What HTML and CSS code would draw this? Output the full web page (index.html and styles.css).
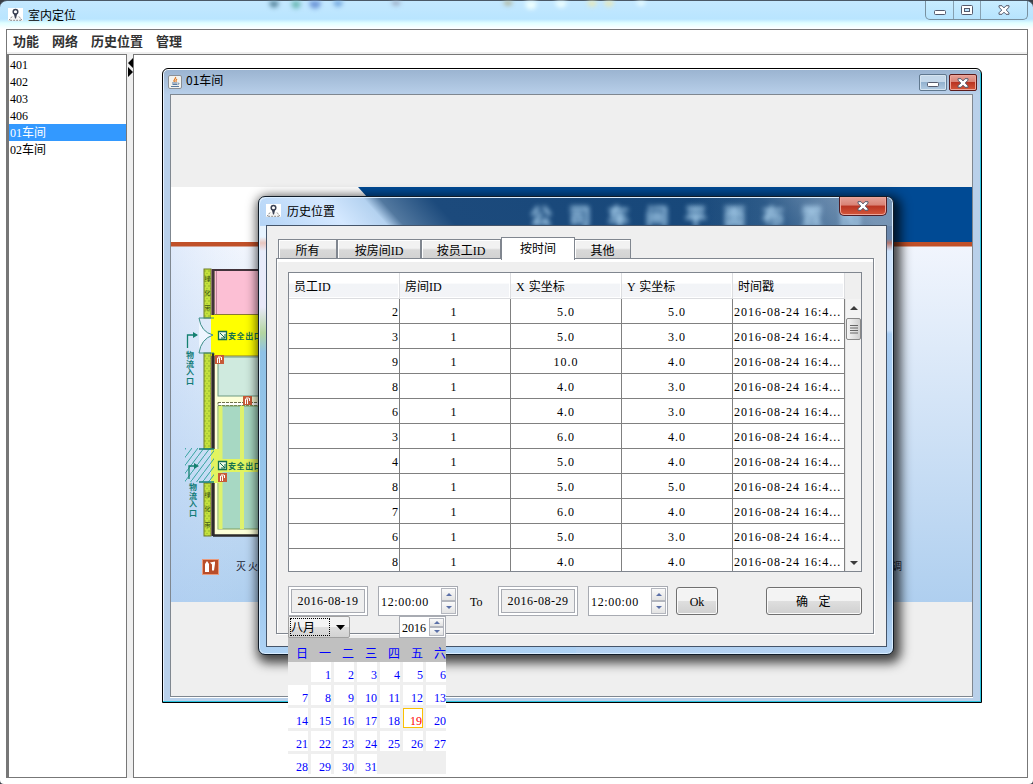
FILE: index.html
```html
<!DOCTYPE html>
<html lang="zh-CN">
<head>
<meta charset="utf-8">
<title>室内定位</title>
<link rel="stylesheet" href="styles.css">
</head>
<body>
<svg class="defs" width="0" height="0">
  <symbol id="pin" viewBox="0 0 15 13">
    <rect width="15" height="13" fill="#fff"/>
    <path d="M4 8.500 1 12.300h13l-3-3.800" fill="#f6f6f6" stroke="#888" stroke-width="1" stroke-dasharray="2 1"/>
    <circle cx="7.500" cy="3.700" r="2.300" fill="#fff" stroke="#3c4254" stroke-width="1.500"/>
    <path d="M5.800 5.800h3.400L8 10.500H7z" fill="#3c4254"/>
  </symbol>
  <symbol id="cross" viewBox="0 0 12 10">
    <path d="M1 .7h3l2 2.200L8 .7h3v1.600L8.200 5 11 7.800v1.500H8L6 7.200 4 9.300H1V7.800L3.800 5 1 2.300z" fill="#fff" stroke="#555a6c" stroke-width="1"/>
  </symbol>
  <symbol id="bar" viewBox="0 0 12 5">
    <rect x=".5" y=".5" width="11" height="4" rx="1" fill="#fff" stroke="#555a6c"/>
  </symbol>
</svg>

<div class="main">
  <header class="main-title">
    <svg class="pin"><use href="#pin"/></svg>
    <span>室内定位</span>
    <div class="blobs"></div>
    <div class="main-buttons">
      <b><svg width="12" height="5"><use href="#bar"/></svg></b>
      <b><svg width="12" height="10" viewBox="0 0 12 10"><rect x=".5" y=".5" width="11" height="9" rx="1" fill="#fff" stroke="#555a6c"/><rect x="3.500" y="3.500" width="5" height="3" fill="#bfe6ff" stroke="#555a6c"/></svg></b>
      <b><svg width="12" height="10"><use href="#cross"/></svg></b>
    </div>
  </header>
  <div class="client">
    <nav class="menu"><span>功能</span><span>网络</span><span>历史位置</span><span>管理</span></nav>
    <div class="split">
      <ul class="rooms">
        <li>401</li><li>402</li><li>403</li><li>406</li><li class="on">01车间</li><li>02车间</li>
      </ul>
      <div class="divider"><svg width="6" height="22" viewBox="0 0 6 22"><path d="M6 3v10L1 8zM1 12v10l5-5z" fill="#000"/></svg></div>
      <div class="desk"></div>
    </div>
  </div>
</div>

<section class="frame">
  <header class="frame-title">
    <svg width="14" height="14" viewBox="0 0 14 14"><rect x=".5" y=".5" width="13" height="13" rx="1.500" fill="#f2f2ee" stroke="#8a8f96"/><path d="M7.500 2c1 1.500-3 2.500-1 5M9 4c-1.500 1-1.500 1.500-.8 3" stroke="#e07820" stroke-width="1.200" fill="none"/><path d="M4 8h5.500M4.500 9.500h4.500M3 11.500h8M10 8c1.500 0 1 1.500-.5 1.700" stroke="#5a7ba0" fill="none"/></svg>
    <span>01车间</span>
    <div class="frame-buttons"><b><svg width="12" height="5"><use href="#bar"/></svg></b><b class="red"><svg width="12" height="10"><use href="#cross"/></svg></b></div>
  </header>
  <div class="frame-body">
    <svg class="plan" width="801" height="415" viewBox="171 187 801 415">
      <defs>
        <linearGradient id="sky" x1="0" y1="0" x2="0" y2="1"><stop offset="0" stop-color="#f1f5fd"/><stop offset="1" stop-color="#afcfef"/></linearGradient>
        <linearGradient id="left" x1="0" y1="0" x2="1" y2="0"><stop offset="0" stop-color="#b5cff5" stop-opacity=".3"/><stop offset="1" stop-color="#c5dcf8" stop-opacity="0"/></linearGradient>
        <pattern id="hedge" width="4" height="5" patternUnits="userSpaceOnUse"><rect width="4" height="5" fill="#c3e03c"/><circle cx="1" cy="1" r=".7" fill="#7da52a"/><circle cx="3" cy="3.500" r=".6" fill="#8cb02c"/></pattern>
        <pattern id="hatch" width="6" height="8" patternUnits="userSpaceOnUse"><path d="M0 8 6 0" stroke="#35a3a0" stroke-width="1"/></pattern>
        <g id="fire"><rect width="9" height="9" fill="#c75a38"/><path d="M2.500 8V3h2v5M6.500 2v3M3 2h3" stroke="#fff" fill="none"/></g>
      </defs>
      <rect x="171" y="187" width="801" height="55" fill="#fff"/>
      <path d="M358 187h614v55H408z" fill="#004a94"/>
      <rect x="171" y="246" width="801" height="356" fill="url(#sky)"/>
      <rect x="171" y="246" width="70" height="356" fill="url(#left)"/>
      <rect x="171" y="242" width="801" height="4.500" fill="#c05029"/>
      <rect x="204" y="269" width="7" height="49" fill="url(#hedge)" stroke="#6e7c28"/>
      <rect x="204" y="353" width="7" height="96" fill="url(#hedge)" stroke="#6e7c28"/>
      <rect x="204" y="483" width="7" height="53" fill="url(#hedge)" stroke="#6e7c28"/>
      <path d="M211 269h4v49h-4zM211 353h4v96h-4zM211 483h4v53h-4z" fill="#8a7868"/>
      <g class="green"><text x="204.500" y="281">绿</text><text x="204.500" y="295">化</text><text x="204.500" y="310">带</text><text x="204.500" y="497">绿</text><text x="204.500" y="511">化</text><text x="204.500" y="527">带</text></g>
      <rect x="215" y="270" width="60" height="266" fill="#fcffd8"/>
      <rect x="215" y="271" width="62" height="43" fill="#fcbfd4"/>
      <path d="M216.500 271v43" stroke="#c48aa0"/>
      <path d="M213 318V269M213 270h62" stroke="#43333b" stroke-width="2" fill="none"/>
      <path d="M211 315h64v41h-64z" fill="#ff0"/>
      <path d="M215 314.500h60M217 356h58" stroke="#8a7a35"/>
      <rect x="218" y="357" width="57" height="39" fill="#cfeade" stroke="#6c9a80"/>
      <path d="M218 402.500h60v3h-60z" fill="#fff" stroke="#6d7049" stroke-dasharray="3 1"/>
      <rect x="218" y="406" width="57" height="123" fill="#a7d8c3" stroke="#7ea05c"/>
      <path d="M220.500 406v123M242 406v123" stroke="#def26c" stroke-width="4"/>
      <path d="M211 459h64v13h-64zM211 449h8v34h-8z" fill="#e2f460"/>
      <path d="M213 353v96M213 483v53M213 535.500h62" stroke="#2b2b2b" stroke-width="2.500" fill="none"/>
      <path d="M199 318h15M199 353h15M199 318q2 14 14 17q-12 4-14 18" fill="#eef6ff" stroke="#3c8e88"/>
      <rect x="185" y="448" width="29" height="34" fill="url(#hatch)"/>
      <path d="M199 449h15M199 482h15" stroke="#16807a" stroke-width="1.500"/>
      <path d="M187.500 348v-13h9M189 479v-13h7" stroke="#148070" stroke-width="1.300" fill="none"/>
      <path d="M193 332l5 3-5 3zM194 463l5 3-5 3z" fill="#148070"/>
      <path d="M218.500 331.500h8v8h-8zM218.500 461.500h8v8h-8z" fill="#effbe8" stroke="#137050" stroke-width="1.300"/>
      <path d="M220 333l5 5m0-4v4h-4M220 463l5 5m0-4v4h-4" stroke="#137050" fill="none"/>
      <text class="exit" x="228" y="339">安全出口</text>
      <text class="exit" x="228" y="469">安全出口</text>
      <text class="gate" x="190" y="351">物流入口</text>
      <text class="gate" x="193" y="483">物流入口</text>
      <use href="#fire" x="215" y="355"/><use href="#fire" x="243" y="396"/><use href="#fire" x="218" y="473"/>
      <rect x="202.500" y="559.500" width="16" height="15" fill="#b84d29" stroke="#e99a7c"/>
      <path d="M205 572v-8l2-3 2 3v8zM210 562.500l5-1v2l-1 7h-2v-6z" fill="#fff"/>
      <text class="legend" x="236" y="570">灭火器</text>
      <text class="legend" x="892" y="570">调</text>
    </svg>
  </div>
</section>

<section class="dialog">
  <div class="glass"><i>公司车间平面布置图</i></div>
  <header class="dialog-title">
    <svg class="pin"><use href="#pin"/></svg>
    <span>历史位置</span>
    <b class="close"><svg width="12" height="10"><use href="#cross"/></svg></b>
  </header>
  <div class="dialog-body">
    <div class="tabs">
      <span class="t1">所有</span><span class="t2">按房间ID</span><span class="t3">按员工ID</span><span class="t4">按时间</span><span class="t5">其他</span>
    </div>
    <div class="panel">
      <div class="table">
        <div class="row head"><span>员工ID</span><span>房间ID</span><span>X 实坐标</span><span>Y 实坐标</span><span>时间戳</span></div>
        <div class="scroll">
          <div class="rows">
            <div class="row"><span>2</span><span>1</span><span>5.0</span><span>5.0</span><span>2016-08-24 16:4...</span></div>
            <div class="row"><span>3</span><span>1</span><span>5.0</span><span>3.0</span><span>2016-08-24 16:4...</span></div>
            <div class="row"><span>9</span><span>1</span><span>10.0</span><span>4.0</span><span>2016-08-24 16:4...</span></div>
            <div class="row"><span>8</span><span>1</span><span>4.0</span><span>3.0</span><span>2016-08-24 16:4...</span></div>
            <div class="row"><span>6</span><span>1</span><span>4.0</span><span>3.0</span><span>2016-08-24 16:4...</span></div>
            <div class="row"><span>3</span><span>1</span><span>6.0</span><span>4.0</span><span>2016-08-24 16:4...</span></div>
            <div class="row"><span>4</span><span>1</span><span>5.0</span><span>4.0</span><span>2016-08-24 16:4...</span></div>
            <div class="row"><span>8</span><span>1</span><span>5.0</span><span>5.0</span><span>2016-08-24 16:4...</span></div>
            <div class="row"><span>7</span><span>1</span><span>6.0</span><span>4.0</span><span>2016-08-24 16:4...</span></div>
            <div class="row"><span>6</span><span>1</span><span>5.0</span><span>3.0</span><span>2016-08-24 16:4...</span></div>
            <div class="row"><span>8</span><span>1</span><span>4.0</span><span>4.0</span><span>2016-08-24 16:4...</span></div>
          </div>
          <div class="bar">
            <svg width="8" height="4" viewBox="0 0 8 4"><path d="M0 4 4 0l4 4z" fill="#3c3c3c"/></svg>
            <div class="thumb"><svg width="8" height="9" viewBox="0 0 8 9"><path d="M0 .5h8M0 3h8M0 5.500h8M0 8h8" stroke="#666"/></svg></div>
            <svg class="down" width="8" height="4" viewBox="0 0 8 4"><path d="M0 0h8L4 4z" fill="#3c3c3c"/></svg>
          </div>
        </div>
      </div>
      <div class="controls">
        <div class="date"><span>2016-08-19</span></div>
        <div class="spin s1"><span>12:00:00</span><em><i class="up"></i><i class="dn"></i></em></div>
        <span class="to">To</span>
        <div class="date"><span>2016-08-29</span></div>
        <div class="spin s2"><span>12:00:00</span><em><i class="up"></i><i class="dn"></i></em></div>
        <div class="btn ok">Ok</div>
        <div class="btn confirm">确&nbsp; 定</div>
      </div>
    </div>
  </div>
</section>

<section class="calendar">
  <div class="cal-top">
    <div class="combo"><span>八月</span><svg width="9" height="5" viewBox="0 0 9 5"><path d="M0 0h9L4.500 5z" fill="#000"/></svg></div>
    <div class="spin year"><span>2016</span><em><i class="up"></i><i class="dn"></i></em></div>
  </div>
  <div class="week"><span>日</span><span>一</span><span>二</span><span>三</span><span>四</span><span>五</span><span>六</span></div>
  <div class="days">
    <span class="none"></span><span>1</span><span>2</span><span>3</span><span>4</span><span>5</span><span>6</span>
    <span>7</span><span>8</span><span>9</span><span>10</span><span>11</span><span>12</span><span>13</span>
    <span>14</span><span>15</span><span>16</span><span>17</span><span>18</span><span class="today">19</span><span>20</span>
    <span>21</span><span>22</span><span>23</span><span>24</span><span>25</span><span>26</span><span>27</span>
    <span>28</span><span>29</span><span>30</span><span>31</span>
  </div>
</section>
</body>
</html>
```
FILE: styles.css
```css
* { box-sizing: border-box; }
body { margin: 0; width: 1033px; height: 784px; overflow: hidden; background: #3a3f47; color: #000;
  font: 12px/16px "Liberation Serif", "Noto Sans CJK SC", serif; }
svg { display: block; flex: none; }
b, i, em { font-style: normal; font-weight: normal; }
.defs { position: absolute; }
.pin { width: 15px; height: 13px; }

.main { height: 784px; display: flex; flex-direction: column; padding: 0 5px 6px 6px; border-top: 1px solid #4a5866; border-radius: 7px 7px 4px 4px;
  background: linear-gradient(#c4e8ff 0, #b9e5ff 18px, #e0ffff 22px, #fff 28px, #fff); }
.main-title { height: 28px; flex: none; display: flex; align-items: flex-start; padding: 7px 0 0 2px; }
.main-title > span { margin: -1px 0 0 5px; font-family: "Noto Sans CJK SC", sans-serif; }
.blobs { flex: 1; align-self: flex-start; height: 9px; margin: -7px 0 0; filter: blur(2px);
  background: radial-gradient(circle at 198px 2px, #5a88a0 3px, transparent 6px), radial-gradient(circle at 220px 3px, #6fbbb8 3px, transparent 6px), radial-gradient(circle at 239px 2px, #6d96d8 4px, transparent 7px), radial-gradient(circle at 262px 1px, #6fa4dd 3px, transparent 6px), radial-gradient(circle at 320px 0, #9aa9c0 3px, transparent 6px), radial-gradient(circle at 432px 0, #b0b498 3px, transparent 6px), radial-gradient(circle at 455px 3px, #eff 4px, transparent 7px), radial-gradient(circle at 485px 1px, #eff 4px, transparent 7px), radial-gradient(circle at 516px 1px, #e8e8b8 3px, transparent 6px), radial-gradient(circle at 533px 1px, #e8e8b8 3px, transparent 6px), radial-gradient(circle at 565px 0, #eff 3px, transparent 6px); }
.main-buttons { display: flex; width: 103px; height: 19px; margin: -7px 0 0; border: 1px solid #78909f; border-top: 0; border-radius: 0 0 5px 5px; background: linear-gradient(#c8ecff, #b6e3fd); }
.main-buttons b { flex: 0 0 27px; display: flex; align-items: center; justify-content: center; border-right: 1px solid #86a0b0; }
.main-buttons b:first-child { flex-basis: 28px; padding-top: 5px; }
.main-buttons b:last-child { flex: 1; border: 0; }

.client { flex: 1; min-height: 0; display: flex; flex-direction: column; border: 1px solid #777; border-bottom: 0; background: #efefef; }
.menu { height: 22px; flex: none; display: flex; gap: 13px; padding: 0 6px; background: #fff; color: #333; font: 700 13px/21px "Noto Sans CJK SC", sans-serif; }
.split { flex: 1; display: flex; padding-top: 2px; }
.rooms { list-style: none; width: 120px; margin: 0; padding: 1px 0 0; border: 1px solid #777; border-left-width: 2px; background: #fff; }
.rooms li { height: 17px; line-height: 19px; padding-left: 1px; }
.rooms .on { background: #39f; color: #fff; }
.divider { width: 6px; padding-top: 1px; }
.desk { flex: 1; background: #fff; border: solid #777; border-width: 1px 0 1px 1px; }

.frame { position: absolute; left: 162px; top: 68px; width: 820px; height: 635px; border: 1px solid #000; border-radius: 6px 6px 0 0; padding: 0 8px 5px 7px; display: flex; flex-direction: column;
  background: linear-gradient(#9ab3d0, #b9d0ea 26px); box-shadow: inset -1px -1px #2ac3df, inset 0 1px #fff, inset 1px 0 #e7f2ff; }
.frame-title { height: 25px; flex: none; display: flex; align-items: flex-start; padding: 6px 0 0; margin-left: -2px; }
.frame-title > span { margin: -3px 0 0 4px; font-family: "Noto Sans CJK SC", sans-serif; }
.frame-buttons { display: flex; gap: 2px; margin: -1px -4px 0 auto; }
.frame-buttons b { width: 28px; height: 17px; border: 1px solid #60788f; border-radius: 2px; display: flex; align-items: center; justify-content: center; background: linear-gradient(#c5d8ea 45%, #93b2cf 50%, #b2cbe2); box-shadow: inset 0 0 0 1px #d6e4f0; }
.frame-buttons b:first-child { padding-top: 3px; }
.frame-buttons .red, .close { background: linear-gradient(#e5a399 0, #d98275 45%, #b93422 50%, #d4573a); border-color: #5b1a1a; box-shadow: inset 0 0 0 1px #eda69a; }
.frame-body { flex: 1; border: 1px solid #7f8790; background: #efefef; padding-top: 92px; box-shadow: 0 1px #fff; }
.exit { font: 700 8px "Noto Sans CJK SC", sans-serif; fill: #157050; letter-spacing: .6px; }
.gate { font: 700 8px "Noto Sans CJK SC", sans-serif; fill: #147c78; writing-mode: vertical-rl; letter-spacing: .5px; }
.green { font: 6px "Noto Sans CJK SC", sans-serif; fill: #2f4a10; }
.legend { font: 10px "Noto Sans CJK SC", sans-serif; fill: #223; letter-spacing: 2px; }

.dialog { position: absolute; left: 258px; top: 196px; width: 636px; height: 459px; border: 1px solid #111c28; border-radius: 7px; padding: 0 6px 7px 7px; display: flex; flex-direction: column;
  background: linear-gradient(#e8f4ff 0 40px, #eac6be 46px, #e8ecfa 54px, #e8e8f8 110px, #b3d6a0 136px, #8fc2e6 155px, #9dc9f0 390px, #aed2f4) left / 50% 100% no-repeat, linear-gradient(#6b88ad 0 42px, #b5766e 46px, #cce2fb 54px 133px, #a8cdf3 137px, #8db9e4 380px, #b5d3f2) right / 50% 100% no-repeat, #afcef0;
  box-shadow: inset 0 0 0 1px #d9edff, 3px 4px 11px 4px rgba(0,0,0,.72); }
.glass { position: absolute; left: 1px; top: 1px; right: 1px; height: 28px; overflow: hidden; border-radius: 6px 6px 0 0; background: linear-gradient(48deg, #b4d4f6 0, #d4e8ff 13%, #b4d2f0 19.500%, #52789f 22%, #1c4a7c 30%, #164779 80%, #6988aa 94%); }
.glass::after { content: ""; position: absolute; inset: 0; background: linear-gradient(90deg, transparent 68%, rgba(150,178,205,.3) 88%); }
.glass i { position: absolute; left: 270px; top: 4px; white-space: nowrap; font: 700 22px/24px "Noto Sans CJK SC", sans-serif; letter-spacing: 16.700px; color: #b4dcf8; filter: blur(2.500px); }
.dialog-title { position: relative; height: 28px; flex: none; display: flex; align-items: flex-start; padding: 7px 0 0; }
.dialog-title > span { margin: -1px 0 0 6px; font-family: "Noto Sans CJK SC", sans-serif; }
.close { width: 48px; height: 19px; margin: -7px 0 0 auto; border: 1px solid #501c24; border-top: 0; border-radius: 0 0 5px 5px; display: flex; align-items: center; justify-content: center; }
.dialog-body { position: relative; flex: 1; border: 1px solid #45556a; background: #efefef; padding: 11px 12px 12px 9px; display: flex; flex-direction: column; }
.tabs { display: flex; height: 22px; align-items: flex-end; padding-left: 2px; position: relative; margin-bottom: -1px; }
.tabs span { height: 20px; line-height: 22px; text-align: center; border: 1px solid #80868f; background: linear-gradient(#f2f2f2 45%, #d8d8d8 55%, #d2d2d2); box-shadow: inset 1px 1px #fff; }
.tabs .t1 { width: 59px; } .tabs .t2 { width: 84px; } .tabs .t3 { width: 80px; }
.tabs .t4 { width: 74px; height: 23px; background: #fff; border-bottom: 0; line-height: 22px; margin-bottom: -1px; }
.tabs .t5 { width: 56px; border-left: 0; }
.panel { flex: 1; border: 1px solid #80868f; padding: 13px 11px 0 11px; box-shadow: inset 1px 3px #fff, 1px 1px #fff; }
.table { height: 300px; border: 1px solid #80868f; background: #efefef; overflow: hidden; }
.row { display: grid; grid-template: 25px / 111px 111px 111px 111px 112px; height: 25px; width: 556px; }
.row span { padding-right: 2px; border-right: 1px solid #808080; border-bottom: 1px solid #808080; line-height: 26px; text-align: center; letter-spacing: 1px; white-space: nowrap; background: #fff; }
.row span:first-child { text-align: right; padding-right: 0; }
.row span:nth-child(3), .row span:nth-child(4) { padding-right: 0; }
.row span:last-child { text-align: left; padding-left: 1px; }
.head.row { height: 26px; grid-template-rows: 26px; }
.head.row span, .head.row span:last-child { text-align: left; padding-left: 5px; line-height: 28px; letter-spacing: 0; border-color: #dcdde0; background: linear-gradient(#fff 40%, #f2f4f7 45%, #f3f4f7); box-shadow: inset -1px -1px #fff; }
.head.row span:nth-child(3), .head.row span:nth-child(4) { word-spacing: 1px; }
.scroll { display: flex; }
.rows { width: 556px; }
.bar { flex: 1; height: 273px; background: #f3f3f3; border-left: 1px solid #e4e4e4; display: flex; flex-direction: column; align-items: center; padding-top: 7px; }
.thumb { width: 15px; height: 22px; margin-top: 8px; border: 1px solid #888; border-radius: 2px; background: linear-gradient(90deg, #f6f6f6, #cfcfcf); display: flex; align-items: center; justify-content: center; }
.down { margin: auto 0 7px; }
.controls { display: flex; margin-top: 14px; height: 30px; align-items: flex-start; }
.date { width: 80px; height: 30px; border: 1px solid #a8abb2; background: #fff; padding: 2px; }
.date span { display: block; height: 24px; border: 1px solid #a8abb2; background: #efefef; text-align: center; line-height: 23px; letter-spacing: .5px; }
.spin { width: 80px; height: 30px; border: 1px solid #a8abb2; background: #fff; display: flex; padding: 1px 1px 1px 2px; line-height: 28px; letter-spacing: .65px; }
.spin em { margin-left: auto; width: 15px; display: flex; flex-direction: column; }
.spin em i { flex: 1; border: 1px solid #b3b6be; background: linear-gradient(#fafafa, #e3e3e3); display: flex; align-items: center; justify-content: center; }
.spin i::before { content: ""; border: 3px solid transparent; }
.up::before { border-top: 0 !important; border-bottom-color: #5b70a8 !important; }
.dn::before { border-bottom: 0 !important; border-top-color: #5b70a8 !important; }
.s1 { margin-left: 10px; }
.to { margin: 8px 14px 0 12px; width: 14px; }
.s2 { margin-left: 10px; }
.btn { height: 28px; border: 1px solid #707070; border-radius: 3px; background: linear-gradient(#f3f3f3 48%, #dedede 52%, #d0d0d0); box-shadow: inset 0 0 0 1px #fafafa; text-align: center; line-height: 28px; }
.ok { width: 42px; margin: 1px 48px 0 8px; }
.confirm { width: 96px; margin-top: 1px; letter-spacing: 1.500px; }

.calendar { position: absolute; left: 288px; top: 616px; width: 158px; height: 158px; overflow: hidden; }
.cal-top { display: flex; justify-content: space-between; height: 22px; }
.combo { width: 62px; height: 22px; border: 1px solid #a0a0a0; border-radius: 0 2px 2px 0; background: linear-gradient(#f3f3f3 48%, #dedede 52%, #d2d2d2); display: flex; align-items: center; padding: 0 4px 0 1px; justify-content: space-between; }
.combo span { width: 40px; height: 18px; border: 1px dotted #000; line-height: 19px; }
.year { width: 47px; height: 22px; line-height: 21px; letter-spacing: 0; padding: 1px; }
.year em { width: 15px; }
.year span { padding-left: 1px; }
.week, .days { display: grid; grid-template-columns: repeat(7, 20px); column-gap: 3px; color: #00f; text-align: right; }
.week { background: #c0c0c0; height: 24px; line-height: 32px; }
.days { background: #efefef; grid-auto-rows: 20px; row-gap: 3px; height: 112px; line-height: 27px; }
.days span { background: #fff; height: 20px; }
.days .none { background: none; }
.days .today { border: 1px solid #fbc000; color: #f00; line-height: 25px; }
```
